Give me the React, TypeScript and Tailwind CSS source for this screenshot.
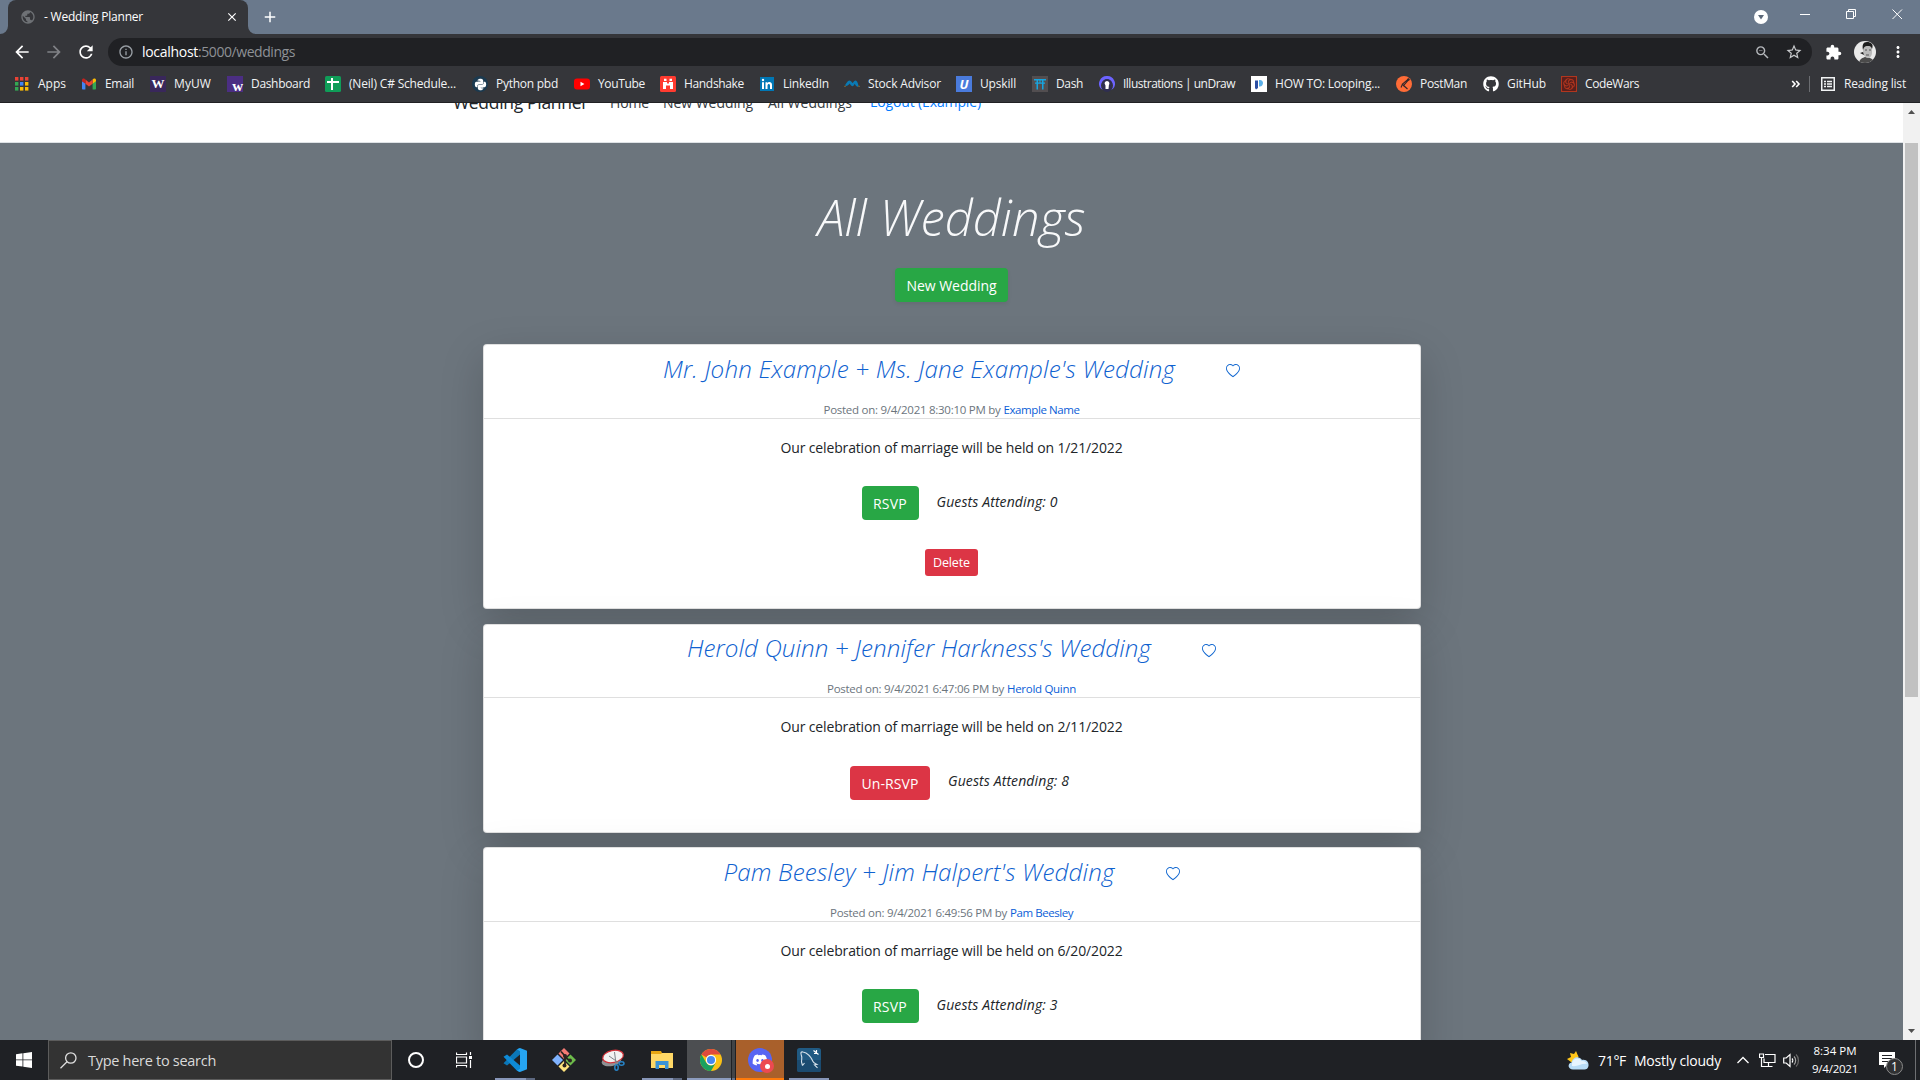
import { useLayoutEffect, useRef, useState, type ReactNode } from "react";
import { FaGithub, FaPython, FaDiscord } from "react-icons/fa";
import { BsHeart } from "react-icons/bs";
import { SiCodewars } from "react-icons/si";
import {
  MdArrowBack,
  MdArrowForward,
  MdRefresh,
  MdInfoOutline,
  MdStarBorder,
  MdOutlineZoomOut,
  MdExtension,
  MdMoreVert,
  MdPublic,
  MdClose,
  MdAdd,
} from "react-icons/md";

/** A single line of text whose tracking is adjusted to fill `w` pixels. */
function Fit({ w, children, className = "" }: { w: number; children: string; className?: string }) {
  const ref = useRef<HTMLSpanElement>(null);
  const [spacing, setSpacing] = useState(0);
  useLayoutEffect(() => {
    const el = ref.current;
    if (!el) return;
    el.style.letterSpacing = "0px";
    const natural = el.getBoundingClientRect().width;
    const next = (w - natural) / children.length;
    el.style.letterSpacing = `${next}px`;
    setSpacing(next);
  }, [w, children]);
  return (
    <span ref={ref} className={`inline-block shrink-0 whitespace-pre ${className}`} style={{ letterSpacing: `${spacing}px` }}>
      {children}
    </span>
  );
}

/* ---------- bookmark icons ---------- */

function AppsIcon() {
  const colors = ["#ea4335", "#ea4335", "#ea4335", "#34a853", "#4285f4", "#fbbc05", "#34a853", "#fbbc05", "#fbbc05"];
  return (
    <svg viewBox="0 0 16 16" className="size-4">
      {colors.map((c, i) => (
        <rect key={i} x={1 + (i % 3) * 5} y={1 + Math.floor(i / 3) * 5} width="3.4" height="3.6" fill={c} />
      ))}
    </svg>
  );
}
function GmailIcon() {
  return (
    <svg viewBox="0 0 16 16" className="size-4">
      <path d="M1 5v7.4c0 .6.4 1 1 1h2.4V7.2z" fill="#4285f4" />
      <path d="M15 5v7.4c0 .6-.4 1-1 1h-2.4V7.2z" fill="#34a853" />
      <path d="M11.6 3.6v4.2L15 5.2V4c0-1.4-1.500-2-2.500-1.200z" fill="#fbbc04" />
      <path d="M4.400 3.600 8 6.400l3.600-2.800v4.200L8 10.500 4.400 7.800z" fill="#ea4335" />
      <path d="M1 4v1.200l3.400 2.600V3.600l-.9-.8C2.500 2 1 2.600 1 4z" fill="#c5221f" />
    </svg>
  );
}
function WIcon({ low = false }: { low?: boolean }) {
  return low ? (
    <span className="flex size-4 items-end justify-end bg-[#4b2e83] font-['Liberation_Serif',serif] text-[15px] leading-[11px] font-bold text-white">w</span>
  ) : (
    <span className="flex size-4 items-center justify-center bg-[#39275b] font-['Liberation_Serif',serif] text-[13px] leading-4 font-bold text-white">W</span>
  );
}
function SheetsIcon() {
  return (
    <svg viewBox="0 0 16 16" className="size-4">
      <rect width="16" height="16" rx="1.500" fill="#0f9d58" />
      <path d="M2 5h12v2H8v7H6V7H2zM6 2h2v4H6z" fill="#fff" />
    </svg>
  );
}
function PythonIcon() {
  return (
    <span className="flex size-4 items-center justify-center rounded-full bg-[#1b3a50]">
      <FaPython size={13} color="#fff" />
    </span>
  );
}
function YoutubeIcon() {
  return (
    <svg viewBox="0 0 16 16" className="size-4">
      <rect x="0" y="2.500" width="16" height="11" rx="3" fill="#f00" />
      <path d="M6.500 5.700v4.600L10.400 8z" fill="#fff" />
    </svg>
  );
}
function HandshakeIcon() {
  return (
    <svg viewBox="0 0 16 16" className="size-4">
      <rect width="16" height="16" rx="1.500" fill="#ff3b30" />
      <path d="M3 6h4v1.500h2V6h4v7h-3v-3.500H6V13H3z" fill="#fff" />
      <path d="M4 2.800h2.500V5H4zM9.500 2.800H12V5H9.500z" fill="#fff" />
    </svg>
  );
}
function LinkedinIcon() {
  return (
    <svg viewBox="0 0 16 16" className="size-4">
      <rect x="1" y="1" width="14" height="14" fill="#0077b5" />
      <path d="M3 6.200h2V13H3zM6.500 6.200h1.900v1c.9-1.700 4.600-1.700 4.600 1.600V13h-2V9.500c0-2.300-2.500-2-2.500 0V13h-2z" fill="#fff" />
      <circle cx="4" cy="4" r="1.200" fill="#fff" />
    </svg>
  );
}
function StockIcon() {
  return (
    <svg viewBox="0 0 16 16" className="size-4">
      <path d="M1 9.500C2 8 3.500 4.500 5.500 4.500S7.800 7 8.600 7 9.700 4.500 11.300 4.500C13.800 4.500 14 9 15 10.500c-2 1-3.500-1-4.300-2.800C9.500 11 7.500 11 5.800 7.500 4 9.500 2.500 10.500 1 9.500z" fill="#0a7ab3" />
      <path d="M0 9.700h2v1.200H0zM14 9.700h2v1.200h-2z" fill="#6d5a33" />
    </svg>
  );
}
function UpskillIcon() {
  return <span className="flex size-4 items-center justify-center bg-[#4a7bdc] font-['Open_Sans',sans-serif] text-[13px] leading-4 font-bold text-white italic">U</span>;
}
function DashIcon() {
  return (
    <svg viewBox="0 0 16 16" className="size-4">
      <rect width="16" height="16" fill="#524e50" />
      <path d="M2 3h12v1.500H2zM3 6.500h10v1.200H3zM4.500 4H6v9.500H4.500zM10 4h1.500v9.500H10zM7.500 4h1v3h-1z" fill="#16a5e0" />
    </svg>
  );
}
function UndrawIcon() {
  return (
    <svg viewBox="0 0 16 16" className="size-4">
      <path d="M8 0a7.700 7.700 0 0 0-6 12.800L4 14a6 6 0 1 1 8 0l2-1.200A7.700 7.700 0 0 0 8 0z" fill="#6c63ff" />
      <path d="M2.500 11.500C5 10 11 10 13.500 11.500 12 15 10 16 8 16s-4-1-5.500-4.500z" fill="#2f2e51" />
      <circle cx="8" cy="8" r="5" fill="#2f2e51" />
      <path d="M5.600 7.500a2.400 2.400 0 1 1 4.300 1.500L9.500 13h-3V9.500z" fill="#fff" />
    </svg>
  );
}
function HowToIcon() {
  return (
    <svg viewBox="0 0 16 16" className="size-4">
      <rect width="16" height="16" fill="#fff" />
      <path d="M4 4.500h3V12L5 13.500 4 12z" fill="#2c4fa3" />
      <path d="M8 4c2.600-.5 4 1 4 3s-1.500 4-4 3.500z" fill="#5cb1ea" />
    </svg>
  );
}
function PostmanIcon() {
  return (
    <svg viewBox="0 0 16 16" className="size-4">
      <circle cx="8" cy="8" r="8" fill="#ff6c37" />
      <path d="M12.500 3 6.500 8l1 1.500 5-5.500M7 9l4.500 4M6.500 8 5 11.500" stroke="#33262a" strokeWidth="1.100" fill="none" />
      <circle cx="12.500" cy="3.500" r="1.200" fill="#33262a" />
    </svg>
  );
}
function CodewarsIcon() {
  return (
    <span className="flex size-4 items-center justify-center bg-[#b1361e]">
      <SiCodewars size={14} color="#5a1f1c" />
    </span>
  );
}

const bookmarks: { label: string; icon: ReactNode; text: number; slot: string }[] = [
  { label: "Apps", icon: <AppsIcon />, text: 28, slot: "w-[67px]" },
  { label: "Email", icon: <GmailIcon />, text: 29, slot: "w-[69px]" },
  { label: "MyUW", icon: <WIcon />, text: 37, slot: "w-[77px]" },
  { label: "Dashboard", icon: <WIcon low />, text: 59, slot: "w-[98px]" },
  { label: "(Neil) C# Schedule...", icon: <SheetsIcon />, text: 107, slot: "w-[147px]" },
  { label: "Python pbd", icon: <PythonIcon />, text: 62, slot: "w-[102px]" },
  { label: "YouTube", icon: <YoutubeIcon />, text: 47, slot: "w-[86px]" },
  { label: "Handshake", icon: <HandshakeIcon />, text: 60, slot: "w-[99px]" },
  { label: "LinkedIn", icon: <LinkedinIcon />, text: 46, slot: "w-[85px]" },
  { label: "Stock Advisor", icon: <StockIcon />, text: 73, slot: "w-[112px]" },
  { label: "Upskill", icon: <UpskillIcon />, text: 36, slot: "w-[76px]" },
  { label: "Dash", icon: <DashIcon />, text: 27, slot: "w-[67px]" },
  { label: "Illustrations | unDraw", icon: <UndrawIcon />, text: 112, slot: "w-[152px]" },
  { label: "HOW TO: Looping...", icon: <HowToIcon />, text: 105, slot: "w-[145px]" },
  { label: "PostMan", icon: <PostmanIcon />, text: 47, slot: "w-[87px]" },
  { label: "GitHub", icon: <FaGithub size={16} color="#fff" />, text: 39, slot: "w-[78px]" },
  { label: "CodeWars", icon: <CodewarsIcon />, text: 54, slot: "w-[80px]" },
];

function TabStrip() {
  return (
    <div className="flex h-[34px] shrink-0 items-stretch bg-[#6a798c]">
      <svg viewBox="0 0 8 8" className="size-2 self-end">
        <path d="M8 0a8 8 0 0 1-8 8h8z" fill="#35363a" />
      </svg>
      <div className="flex w-60 items-center rounded-t-lg bg-[#35363a] pl-3">
        <MdPublic size={16} color="#6e7175" />
        <Fit w={99} className="ml-2 text-xs text-white">- Wedding Planner</Fit>
        <MdClose size={14} className="mr-[9px] ml-auto text-white" />
      </div>
      <svg viewBox="0 0 8 8" className="size-2 self-end">
        <path d="M0 0a8 8 0 0 0 8 8H0z" fill="#35363a" />
      </svg>
      <MdAdd size={18} className="ml-[5px] self-center text-white" />
      <div className="ml-auto flex items-start">
        <svg viewBox="0 0 14 14" className="mt-[10px] size-[14px]">
          <circle cx="7" cy="7" r="7" fill="#fff" />
          <path d="M4 5h6L7 9.500z" fill="#5b6878" />
        </svg>
        <svg viewBox="0 0 110 12" className="mt-2 mr-[13px] ml-[29px] h-3 w-[110px]" fill="none" stroke="#fff">
          <path d="M3 6.500h10" />
          <path d="M49.500 3.500h7v7h-7zM51.500 3.500v-2h7v7h-2" />
          <path d="m95.500 1.500 9.500 9.500M105 1.500 95.500 11" />
        </svg>
      </div>
    </div>
  );
}

function Avatar() {
  return (
    <svg viewBox="0 0 22 22" className="size-[22px] rounded-full">
      <rect width="22" height="22" fill="#e9e9e9" />
      <path d="M5 22c1-5 4-5 6-6l5 1c3 1 4 3 5 5z" fill="#4b4b4b" />
      <path d="M9 7c0-4 9-4 9 0v4c0 4-2 6-4 6s-5-3-5-6z" fill="#b9b9b9" />
      <path d="M9 9C8 4 9 1 13 1s7 2 5 7c-1-3-2-3-4-3s-4 0-5 4zM6 12l3-1 1 3z" fill="#1d1d1d" />
      <path d="M11 9h2M15 9h2M12 14h3" stroke="#555" />
    </svg>
  );
}

function Toolbar() {
  return (
    <div className="flex h-9 shrink-0 items-center bg-[#35363a] pt-1 pb-1">
      <div className="flex w-[108px] items-center pl-3">
        <MdArrowBack size={20} color="#fff" />
        <MdArrowForward size={20} color="#808286" className="ml-3" />
        <MdRefresh size={20} color="#fff" className="ml-3" />
      </div>
      <div className="flex h-7 w-[1704px] items-center rounded-full bg-[#202124] pl-[10px]">
        <MdInfoOutline size={16} color="#9aa0a6" />
        <span className="ml-2 flex text-sm">
          <Fit w={56} className="text-white">localhost</Fit>
          <Fit w={97} className="text-[#8e9196]">:5000/weddings</Fit>
        </span>
        <MdOutlineZoomOut size={17} color="#b5b8bc" className="ml-auto" />
        <MdStarBorder size={18} color="#c8cacd" className="mr-[9px] ml-[14px]" />
      </div>
      <MdExtension size={17} color="#fff" className="ml-[13px]" />
      <span className="ml-3"><Avatar /></span>
      <MdMoreVert size={18} color="#fff" className="ml-[13px]" />
    </div>
  );
}

function BookmarksBar() {
  return (
    <div className="flex h-[33px] shrink-0 items-center border-b border-[#202124] bg-[#35363a] pb-1 pl-[14px] text-xs text-[#f1f3f4]">
      {bookmarks.map((b) => (
        <div key={b.label} className={`flex shrink-0 items-center gap-2 ${b.slot}`}>
          <span className="flex w-4 shrink-0">{b.icon}</span>
          <Fit w={b.text} className="-mt-px">{b.label}</Fit>
        </div>
      ))}
      <div className="mr-[14px] ml-auto flex items-center">
        <svg viewBox="0 0 10 8" className="h-2 w-[10px]" fill="none" stroke="#fff" strokeWidth="1.600">
          <path d="m1.200 1 2.800 3-2.800 3M5.200 1l2.800 3-2.800 3" />
        </svg>
        <span className="ml-2 h-4 w-px bg-[#6b6d71]" />
        <svg viewBox="0 0 14 14" className="ml-[11px] size-[14px]" fill="none" stroke="#f1f3f4">
          <path d="M.75.750h12.500v12.500H.75z" strokeWidth="1.500" />
          <path d="M3 4.500h2M6 4.500h5M3 7h2M6 7h5M3 9.500h2M6 9.500h5" strokeWidth="1.400" />
        </svg>
        <Fit w={62} className="-mt-px ml-[9px]">Reading list</Fit>
      </div>
    </div>
  );
}

/* ---------- page ---------- */

function SiteNav() {
  return (
    <div className="flex h-10 shrink-0 items-start overflow-hidden border-b border-[#dee2e6] bg-white pl-[453px]">
      <div className="-mt-3 flex h-6 items-center text-[14px] leading-6 text-[#343a40]">
        <Fit w={135} className="-mt-[2px] text-[17.500px] text-[#212529]">Wedding Planner</Fit>
        <Fit w={39} className="ml-[22px]">Home</Fit>
        <Fit w={90} className="ml-[14px]">New Wedding</Fit>
        <Fit w={84} className="ml-[15px]">All Weddings</Fit>
        <Fit w={111} className="-mt-[2px] ml-[18px] text-[#007bff]">Logout (Example)</Fit>
      </div>
    </div>
  );
}

interface Wedding {
  title: string;
  titleW: number;
  posted: string;
  postedW: number;
  author: string;
  authorW: number;
  date: string;
  guests: number;
  going?: boolean;
  own?: boolean;
}

const weddings: Wedding[] = [
  { title: "Mr. John Example + Ms. Jane Example's Wedding", titleW: 512, posted: "Posted on: 9/4/2021 8:30:10 PM by", postedW: 177, author: "Example Name", authorW: 76, date: "1/21/2022", guests: 0, own: true },
  { title: "Herold Quinn + Jennifer Harkness's Wedding", titleW: 464, posted: "Posted on: 9/4/2021 6:47:06 PM by", postedW: 177, author: "Herold Quinn", authorW: 69, date: "2/11/2022", guests: 8, going: true },
  { title: "Pam Beesley + Jim Halpert's Wedding", titleW: 391, posted: "Posted on: 9/4/2021 6:49:56 PM by", postedW: 177, author: "Pam Beesley", authorW: 63, date: "6/20/2022", guests: 3 },
];

function WeddingCard({ w, size, compact = false }: { w: Wedding; size: string; compact?: boolean }) {
  return (
    <div className={`flex w-[938px] shrink-0 flex-col items-center rounded-[4px] border border-black/12 bg-white shadow-[0_14.4px_43.2px_rgba(0,0,0,0.175)] ${size}`}>
      <div className={`flex w-full flex-col items-center border-b border-[#dfdfdf] ${compact ? "h-[73px] pt-[7px]" : "h-[74px] pt-2"}`}>
        <div className="flex h-8 items-center">
          <Fit w={w.titleW} className="text-[24.200px] leading-8 font-light text-[#0f62d0] italic">{w.title}</Fit>
          <BsHeart size={14} className={`ml-[51px] text-[#0f66d0] ${compact ? "mt-[5px]" : "mt-[3px]"}`} />
        </div>
        <div className="mt-[17px] flex h-4 gap-[3px] text-[11.500px] leading-4 text-[#6c757d]">
          <Fit w={w.postedW}>{w.posted}</Fit>
          <Fit w={w.authorW} className="text-[#0b5ed7]">{w.author}</Fit>
        </div>
      </div>
      <Fit w={342} className="mt-[19px] text-[14px] leading-5 text-[#212529]">{`Our celebration of marriage will be held on ${w.date}`}</Fit>
      <div className={`flex h-[34px] items-start pl-4 ${compact ? "mt-[29px]" : "mt-7"}`}>
        {w.going ? (
          <button className="flex h-[34px] w-20 items-center justify-center rounded-[4px] bg-[#dc3545] pt-px text-[14px] text-white">
            <Fit w={57}>Un-RSVP</Fit>
          </button>
        ) : (
          <button className="flex h-[34px] w-[57px] items-center justify-center rounded-[4px] bg-[#28a745] pt-px text-[14px] text-white">
            <Fit w={34}>RSVP</Fit>
          </button>
        )}
        <Fit w={121} className={`ml-[18px] text-[14px] leading-[22px] text-[#212529] italic ${compact ? "mt-1" : "mt-[5px]"}`}>{`Guests Attending: ${w.guests}`}</Fit>
      </div>
      {w.own && (
        <button className="mt-[29px] flex h-[27px] w-[53px] items-center justify-center rounded-[3px] bg-[#dc3545] pt-px text-[12.500px] text-white">
          <Fit w={37}>Delete</Fit>
        </button>
      )}
    </div>
  );
}

function Scrollbar() {
  return (
    <div className="flex w-[17px] shrink-0 flex-col items-center bg-[#f1f1f1]">
      <svg viewBox="0 0 17 17" className="size-[17px]">
        <path d="M5 11h7L8.500 7z" fill="#505050" />
      </svg>
      <div className="mt-[23px] h-[554px] w-[13px] bg-[#c1c1c1]" />
      <svg viewBox="0 0 17 17" className="mt-auto size-[17px]">
        <path d="M5 6h7l-3.500 4z" fill="#505050" />
      </svg>
    </div>
  );
}

/* ---------- taskbar ---------- */

function TaskButton({ children, bar = "", bg = "" }: { children: ReactNode; bar?: string; bg?: string }) {
  return (
    <div className={`flex h-10 w-12 shrink-0 flex-col items-center ${bg}`}>
      <div className="flex h-[38px] items-center pt-[2px]">{children}</div>
      <div className={`h-[2px] self-stretch ${bar}`} />
    </div>
  );
}

function VsCodeIcon() {
  return (
    <svg viewBox="0 0 24 24" className="size-6">
      <path d="M17 0v6.500L4 17.500l-3.500-2.300L14 1.200z" fill="#0b77b8" />
      <path d="M.5 8.800 4 6.500l13 11V24l-3-1.300z" fill="#0e8ad6" />
      <path d="M17 0l7 2.800v18.400L17 24l-3-1.300 3-2V3.300L14 1.200z" fill="#26a5f2" />
    </svg>
  );
}
function GitIcon() {
  return (
    <svg viewBox="0 0 24 24" className="size-6">
      <path d="m12 0 5.500 5.500L12 11 6.500 5.500z" fill="#f47b74" />
      <path d="M5.500 6.500 11 12l-5.500 5.500L0 12z" fill="#80b3ff" />
      <path d="M18.500 6.500 24 12l-5.500 5.500L13 12z" fill="#6dbb4b" />
      <path d="m12 13 5.500 5.500L12 24l-5.500-5.500z" fill="#ffe37d" />
      <path d="M9 3.500 13 8v10M13 9l5 4" stroke="#2a2320" strokeWidth="1.800" fill="none" />
      <circle cx="13" cy="8" r="2" fill="#2a2320" />
      <circle cx="12.500" cy="17.500" r="2" fill="#2a2320" />
      <circle cx="18" cy="12.500" r="2" fill="#2a2320" />
    </svg>
  );
}
function SnipIcon() {
  return (
    <svg viewBox="0 0 24 24" className="size-6">
      <ellipse cx="10.500" cy="13" rx="10" ry="5" fill="#8f9194" transform="rotate(-12 10.500 13)" />
      <ellipse cx="12" cy="8.500" rx="10.500" ry="6" fill="#f2f2f2" stroke="#d3333b" strokeWidth="1.200" transform="rotate(-12 12 8.500)" />
      <path d="m8 8 10 7M13.500 4 15 16" stroke="#7d8288" strokeWidth="1" />
      <g fill="none" stroke="#2783c6" strokeWidth="1.500">
        <ellipse cx="20.500" cy="15.500" rx="2.500" ry="1.700" />
        <ellipse cx="15.500" cy="19.500" rx="1.700" ry="2.800" />
      </g>
    </svg>
  );
}
function FolderIcon() {
  return (
    <svg viewBox="0 0 22 20" className="h-5 w-[22px]">
      <path d="M0 1h10l1 2h11v15H0z" fill="#e8a713" />
      <path d="M0 4h10l1-1h11v15H0z" fill="#ffd866" />
      <path d="M4.500 19v-8h13v8H14v-4H8v4z" fill="#3a93d6" />
    </svg>
  );
}
function ChromeIcon() {
  return (
    <svg viewBox="0 0 24 24" className="size-[22px]">
      <circle cx="12" cy="12" r="12" fill="#fbc116" />
      <path d="M1.600 6A12 12 0 0 1 22.400 6H12a6 6 0 0 0-5.200 3z" fill="#df4a3d" />
      <path d="M1.600 6A12 12 0 0 0 12 24l5.200-9a6 6 0 0 1-10.400 0z" fill="#1aa15f" />
      <circle cx="12" cy="12" r="5.600" fill="#fff" />
      <circle cx="12" cy="12" r="4.400" fill="#4688f1" />
    </svg>
  );
}
function DiscordIcon() {
  return (
    <span className="relative flex size-6 items-center justify-center rounded-full bg-[#5865f2]">
      <FaDiscord size={16} color="#fff" />
      <span className="absolute -right-[2px] -bottom-[1px] flex size-[14px] items-center justify-center rounded-full bg-[#ed4a50]">
        <span className="size-[5px] rounded-full bg-white" />
      </span>
    </span>
  );
}
function MysqlIcon() {
  return (
    <svg viewBox="0 0 24 24" className="size-6">
      <rect width="24" height="24" rx="2.500" fill="#205a83" />
      <path d="M0 12h24v9.500a2.500 2.500 0 0 1-2.500 2.500h-19A2.500 2.500 0 0 1 0 21.500z" fill="#1b4b70" />
      <path d="M5.500 17.500 4.500 14c0-3 1-4-.2-7C3.500 4.500 4 3.500 6 4c5 1 8 5 10 9.500.6 1.500 2.500 2 4 3l-2.500.3 3 3M5.500 17.500l2-2.500" stroke="#d5e1ea" strokeWidth="1.100" fill="none" />
      <path d="m16.500 2.500 5 4M19.500 2v3.500H17" stroke="#fff" strokeWidth="1.200" fill="none" />
    </svg>
  );
}
function WeatherIcon() {
  return (
    <svg viewBox="0 0 22 19" className="h-[19px] w-[22px]">
      <path d="M9 0c1 2 1 3 2.500 5.500L9 12l-5-1-4-3 4-2-1-4 4 1z" fill="#ffc61a" />
      <path d="M6 18.500c-5 0-6-6-1.500-7C5.500 6 12 4 15 9c5-1 7 3 6.500 6-.5 2.500-2 3.500-4 3.500z" fill="#b9ddf7" />
      <path d="M5 12c1-5 7-6 9.500-2 3-.5 5 1 5.500 3-5-1-10 3-15 2z" fill="#e7f5ff" />
    </svg>
  );
}

function Taskbar() {
  return (
    <div className="flex h-10 shrink-0 items-center bg-[#1f2125] text-white">
      <div className="flex w-12 justify-center">
        <svg viewBox="0 0 16 16" className="size-4" fill="#fff">
          <path d="M0 2.200 6.500 1.300v6.200H0zM7.300 1.200 16 0v7.500H7.300zM0 8.300h6.500v6.300L0 13.700zM7.300 8.300H16V16l-8.700-1.200z" />
        </svg>
      </div>
      <div className="flex h-10 w-[344px] items-center border border-[#5c5c5c] bg-[#333333]">
        <svg viewBox="0 0 17 17" className="ml-[11px] size-[17px]" fill="none" stroke="#e0e0e0" strokeWidth="1.300">
          <circle cx="10.800" cy="6" r="5.200" />
          <path d="m7 9.800-6.500 6.500" />
        </svg>
        <Fit w={128} className="mt-[2px] ml-[11px] text-[14.500px] text-[#dadada]">Type here to search</Fit>
      </div>
      <div className="flex w-12 justify-center">
        <span className="size-4 rounded-full border-2 border-white" />
      </div>
      <div className="flex w-[55px] pl-4">
        <svg viewBox="0 0 17 16" className="h-4 w-[17px]" fill="none" stroke="#fff" strokeWidth="1.200">
          <path d="M.5.500v2h10v-2M.5 5h10v6H.5zM.5 15.500v-2h10v2M14.500 0v3M14.500 8v8" />
          <path d="M13 4h3v3h-3z" fill="#fff" stroke="none" />
        </svg>
      </div>
      <div className="flex w-10 flex-col items-center">
        <div className="flex h-[38px] items-center pt-[2px]"><VsCodeIcon /></div>
        <div className="flex h-[2px] w-10"><span className="w-[31px] bg-[#8796b8]" /><span className="grow bg-[#5d6880]" /></div>
      </div>
      <div className="ml-[5px] flex"><TaskButton><GitIcon /></TaskButton></div>
      <div className="ml-px flex"><TaskButton><SnipIcon /></TaskButton></div>
      <div className="ml-[5px] flex w-10 flex-col items-center">
        <div className="flex h-[38px] items-center pt-[2px]"><FolderIcon /></div>
        <div className="flex h-[2px] w-10"><span className="w-[31px] bg-[#8796b8]" /><span className="grow bg-[#5d6880]" /></div>
      </div>
      <div className="ml-[5px] flex w-12">
        <div className="flex w-[44px] flex-col items-center bg-[#4c4e51]">
          <div className="flex h-[38px] items-center pt-[2px] pl-1"><ChromeIcon /></div>
          <div className="h-[2px] self-stretch bg-[#8c9cbe]" />
        </div>
        <div className="ml-px flex w-[3px] flex-col justify-end bg-[#424447]"><span className="h-[2px] bg-[#66718a]" /></div>
      </div>
      <div className="ml-px flex"><TaskButton bg="bg-[#a9602b]" bar="bg-[#ff7a0a]"><DiscordIcon /></TaskButton></div>
      <div className="ml-[5px] flex w-10 flex-col items-center">
        <div className="flex h-[38px] items-center pt-[2px]"><MysqlIcon /></div>
        <div className="h-[2px] w-10 bg-[#8796b8]" />
      </div>

      <div className="ml-auto flex h-10 items-center">
        <WeatherIcon />
        <Fit w={28} className="mt-px ml-[9px] text-[14px]">71°F</Fit>
        <Fit w={87} className="mt-px ml-2 text-[14px]">Mostly cloudy</Fit>
        <svg viewBox="0 0 12 8" className="ml-4 h-2 w-3" fill="none" stroke="#fff" strokeWidth="1.300">
          <path d="m.5 7 5.500-5.500L11.500 7" />
        </svg>
        <svg viewBox="0 0 17 15" className="ml-[10px] h-[15px] w-[17px]" fill="none" stroke="#fff" strokeWidth="1.200">
          <path d="M6 1.500h10v8H5v-4M9.500 10v3.500M5.500 13.500h8M.5 1h4v3.500h-4zM2.500 4.500v9h3" />
        </svg>
        <svg viewBox="0 0 17 15" className="ml-[7px] h-[15px] w-[17px]" fill="none" stroke="#fff" strokeWidth="1.200">
          <path d="M.7 5v5h2.500L7 13.500v-12L3.200 5z" />
          <path d="M9 5.500c1 1 1 3 0 4" />
          <path d="M11 3.500c2.200 2 2.200 6 0 8" stroke="#a5a5a5" />
          <path d="M13 1.500c3.300 3 3.300 9 0 12" stroke="#6a6a6a" />
        </svg>
        <div className="ml-[11px] flex w-12 flex-col items-center text-[11.500px] leading-[18px]">
          <Fit w={43}>8:34 PM</Fit>
          <Fit w={46}>9/4/2021</Fit>
        </div>
        <div className="relative ml-5 h-6 w-[26px]">
          <svg viewBox="0 0 16 16" className="mt-1 size-4">
            <path d="M0 0h16v13H8l-3 3v-3H0z" fill="#fff" />
            <path d="M3 3.500h10M3 6.500h10M3 9.500h6" stroke="#1f2125" strokeWidth="1.200" />
          </svg>
          <span className="absolute top-[10px] left-[7px] flex size-[17px] items-center justify-center rounded-full border border-[#8a8a8a] bg-[#303133] text-[12px] leading-none">1</span>
        </div>
        <span className="mr-1 ml-[10px] h-10 w-px bg-[#6e6f72]" />
      </div>
    </div>
  );
}

export default function App() {
  return (
    <div className="flex h-[1080px] w-[1920px] flex-col overflow-hidden font-['Open_Sans','Noto_Sans',sans-serif]">
      <TabStrip />
      <Toolbar />
      <BookmarksBar />
      <div className="flex h-[937px] shrink-0 overflow-hidden">
        <div className="flex grow flex-col overflow-hidden bg-[#6c757d]">
          <SiteNav />
          <div className="flex shrink-0 flex-col items-center">
            <h1 className="mt-9 flex h-[76px] items-center text-[49px] leading-[76px] font-light text-[#f8f9fa] italic">
              <Fit w={268}>All Weddings</Fit>
            </h1>
            <button className="mt-[13px] flex h-[34px] w-[113px] items-center justify-center rounded-[4px] bg-[#28a745] text-[14px] text-white shadow-[0_2px_4px_rgba(0,0,0,0.075)]">
              <Fit w={90}>New Wedding</Fit>
            </button>
            <div className="mt-[42px] flex flex-col">
              <WeddingCard w={weddings[0]} size="h-[265px]" />
              <WeddingCard w={weddings[1]} size="mt-[15px] h-[209px]" compact />
              <WeddingCard w={weddings[2]} size="mt-[14px] h-[209px]" />
            </div>
          </div>
        </div>
        <Scrollbar />
      </div>
      <Taskbar />
    </div>
  );
}
